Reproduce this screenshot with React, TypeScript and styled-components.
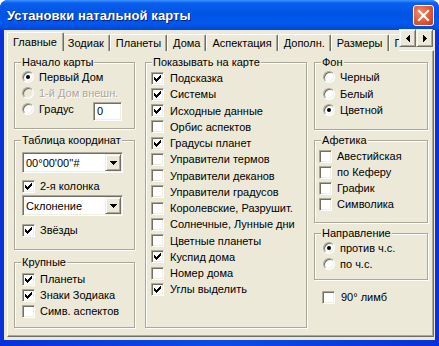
import styled, { createGlobalStyle } from "styled-components";

const GlobalStyle = createGlobalStyle`
  html, body {
    margin: 0;
    padding: 0;
    background: #ffffff;
  }
  body {
    font-family: "Liberation Sans", Arial, sans-serif;
    font-size: 11px;
    color: #000;
  }
`;

const face = "#ECE9D8";
const shadow = "#ACA899";
const dark = "#716F64";
const light = "#F1EFE2";

const Window = styled.div`
  width: 439px;
  height: 346px;
  box-sizing: border-box;
  display: flex;
  flex-direction: column;
  background: linear-gradient(to right, #0831d9, #0a4cea 50%, #0831d9);
  border-radius: 8px 8px 0 0;
  overflow: hidden;
  padding: 0 4px 6px 4px;
`;

const TitleBar = styled.div`
  height: 30px;
  margin: 0 -4px;
  display: flex;
  align-items: center;
  justify-content: space-between;
  padding: 0 5px 0 7px;
  box-sizing: border-box;
  background: linear-gradient(
    to bottom,
    #3d95ff 0%,
    #0a5fef 10%,
    #0054e3 45%,
    #0058ee 80%,
    #0046d5 100%
  );
`;

const Title = styled.span`
  font-family: "Liberation Sans", Arial, sans-serif;
  font-weight: bold;
  font-size: 13px;
  color: #fff;
  text-shadow: 1px 1px 0 #0a1f7a;
  letter-spacing: 0.1px;
`;

const CloseButton = styled.div`
  width: 21px;
  height: 21px;
  box-sizing: border-box;
  border: 1px solid #fff;
  border-radius: 3px;
  background: radial-gradient(circle at 35% 35%, #f08a6e, #e0532f 60%, #c2361a);
  display: flex;
  align-items: center;
  justify-content: center;
`;

const Body = styled.div`
  flex: 1;
  background: ${face};
  display: flex;
  flex-direction: column;
  padding: 1px 2px 3px 3px;
`;

const TabRow = styled.div`
  height: 19px;
  display: flex;
  position: relative;
  z-index: 2;
`;

const TabStrip = styled.div`
  display: flex;
  align-items: flex-end;
  width: 392px;
  overflow: hidden;
  height: 20px;
`;

const Tab = styled.div<{ $active?: boolean }>`
  flex: none;
  box-sizing: border-box;
  height: ${(p) => (p.$active ? "20px" : "17px")};
  margin: ${(p) => (p.$active ? "0 -2px -1px 0" : "0 0 0 0")};
  padding: ${(p) => (p.$active ? "0 6px 0 5px" : "0 5px 0 5px")};
  display: flex;
  align-items: center;
  background: ${face};
  border-top: 1px solid #fff;
  border-left: 1px solid #fff;
  border-right: 1px solid ${dark};
  box-shadow: inset -1px 0 0 ${shadow};
  border-radius: 2px 2px 0 0;
  position: relative;
  z-index: ${(p) => (p.$active ? 3 : 1)};
  white-space: nowrap;
  padding-bottom: ${(p) => (p.$active ? "2px" : "0")};
`;

const Arrows = styled.div`
  display: flex;
  margin-top: -2px;
  height: 18px;
`;

const ArrowButton = styled.div`
  width: 17px;
  height: 18px;
  box-sizing: border-box;
  background: ${face};
  border: 1px solid;
  border-color: ${light} ${dark} ${dark} ${light};
  box-shadow: inset 1px 1px 0 #fff, inset -1px -1px 0 ${shadow};
  display: flex;
  align-items: center;
  justify-content: center;
`;

const Panel = styled.div`
  height: 287px;
  width: 427px;
  box-sizing: border-box;
  border: 1px solid;
  border-color: #fff ${dark} ${dark} #fff;
  box-shadow: inset -1px -1px 0 ${shadow};
  display: flex;
  gap: 0;
  padding: 11px 4px 0 6px;
`;

const Column = styled.div<{ $width: number; $gap: number }>`
  width: ${(p) => p.$width}px;
  margin-right: ${(p) => p.$gap}px;
  display: flex;
  flex-direction: column;
`;

const Group = styled.div<{ $h: number; $pt: number; $pl: number; $mt?: number }>`
  position: relative;
  box-sizing: border-box;
  height: ${(p) => p.$h}px;
  margin-top: ${(p) => p.$mt ?? 0}px;
  border: 1px solid ${shadow};
  box-shadow: inset 1px 1px 0 #fff, 1px 1px 0 #fff;
  padding: ${(p) => p.$pt}px 2px 0 ${(p) => p.$pl}px;
  display: flex;
  flex-direction: column;
`;

const Legend = styled.span`
  position: absolute;
  top: -7px;
  left: 6px;
  padding: 0 1px;
  line-height: 13px;
  background: ${face};
`;

const Row = styled.div<{ $h?: number; $mt?: number; $gap?: number }>`
  height: ${(p) => p.$h ?? 16}px;
  margin-top: ${(p) => p.$mt ?? 0}px;
  display: flex;
  align-items: center;
  gap: ${(p) => p.$gap ?? 5}px;
  white-space: nowrap;
`;

const Label = styled.span<{ $disabled?: boolean }>`
  color: ${(p) => (p.$disabled ? shadow : "#000")};
  text-shadow: ${(p) => (p.$disabled ? "1px 1px 0 #fff" : "none")};
`;

const Box = styled.span`
  flex: none;
  width: 13px;
  height: 13px;
  box-sizing: border-box;
  background: #fff;
  border: 1px solid;
  border-color: ${shadow} #fff #fff ${shadow};
  box-shadow: inset 1px 1px 0 ${dark}, inset -1px -1px 0 ${light};
  display: flex;
  align-items: center;
  justify-content: center;
`;

const Circle = styled.span<{ $disabled?: boolean }>`
  flex: none;
  width: 12px;
  height: 12px;
  box-sizing: border-box;
  border-radius: 50%;
  background: ${(p) => (p.$disabled ? face : "#fff")};
  border: 1px solid;
  border-color: ${shadow} #fff #fff ${shadow};
  box-shadow: inset 1px 1px 0 ${dark}, inset -1px -1px 0 ${light};
  display: flex;
  align-items: center;
  justify-content: center;
`;

const Dot = styled.span`
  width: 4px;
  height: 4px;
  border-radius: 50%;
  background: #000;
`;

const Field = styled.div<{ $w: number; $h: number }>`
  width: ${(p) => p.$w}px;
  height: ${(p) => p.$h}px;
  box-sizing: border-box;
  background: #fff;
  border: 1px solid;
  border-color: ${shadow} #fff #fff ${shadow};
  box-shadow: inset 1px 1px 0 ${dark}, inset -1px -1px 0 ${light};
  display: flex;
  align-items: center;
  padding: 0 2px 0 3px;
`;

const ComboText = styled.span`
  flex: 1;
`;

const DropButton = styled.span`
  width: 16px;
  height: 17px;
  box-sizing: border-box;
  background: ${face};
  border: 1px solid;
  border-color: ${light} ${dark} ${dark} ${light};
  box-shadow: inset 1px 1px 0 #fff, inset -1px -1px 0 ${shadow};
  display: flex;
  align-items: center;
  justify-content: center;
  margin-right: -1px;
`;

const Check = () => (
  <svg width="7" height="7" viewBox="0 0 7 7" shapeRendering="crispEdges">
    <path
      d="M6 0h1v3h-1v1h-1v1h-1v1h-1v1h-1v-1h-1v-1h-1v-3h1v1h1v1h1v-1h1v-1h1v-1h1z"
      fill="#000"
    />
  </svg>
);

const CheckBox = ({ label, checked }: { label: string; checked?: boolean }) => (
  <>
    <Box>{checked && <Check />}</Box>
    <Label>{label}</Label>
  </>
);

const Radio = ({
  label,
  checked,
  disabled,
}: {
  label: string;
  checked?: boolean;
  disabled?: boolean;
}) => (
  <>
    <Circle $disabled={disabled}>{checked && <Dot />}</Circle>
    <Label $disabled={disabled}>{label}</Label>
  </>
);

const DownTriangle = () => (
  <svg width="7" height="4" viewBox="0 0 7 4" shapeRendering="crispEdges">
    <path d="M0 0h7v1h-1v1h-1v1h-1v1h-1v-1h-1v-1h-1v-1h-1z" fill="#000" />
  </svg>
);

const Combo = ({ value }: { value: string }) => (
  <Field $w={101} $h={21}>
    <ComboText>{value}</ComboText>
    <DropButton>
      <DownTriangle />
    </DropButton>
  </Field>
);

const tabs = ["Зодиак", "Планеты", "Дома", "Аспектация", "Дополн.", "Размеры", "Печать"];

const showItems: [string, boolean][] = [
  ["Подсказка", true],
  ["Системы", true],
  ["Исходные данные", true],
  ["Орбис аспектов", false],
  ["Градусы планет", true],
  ["Управители термов", false],
  ["Управители деканов", false],
  ["Управители градусов", false],
  ["Королевские, Разрушит.", false],
  ["Солнечные, Лунные дни", false],
  ["Цветные планеты", false],
  ["Куспид дома", true],
  ["Номер дома", false],
  ["Углы выделить", true],
];

const App = () => {
  return (
    <>
      <GlobalStyle />
      <Window>
        <TitleBar>
          <Title>Установки натальной карты</Title>
          <CloseButton>
            <svg width="13" height="13" viewBox="0 0 13 13">
              <path d="M2 2L11 11M11 2L2 11" stroke="#fff" strokeWidth="2.2" strokeLinecap="square" />
            </svg>
          </CloseButton>
        </TitleBar>
        <Body>
          <TabRow>
            <TabStrip>
              <Tab $active>Главные</Tab>
              {tabs.map((t) => (
                <Tab key={t}>{t}</Tab>
              ))}
            </TabStrip>
            <Arrows>
              <ArrowButton>
                <svg width="4" height="7" viewBox="0 0 4 7" shapeRendering="crispEdges">
                  <path d="M3 0h1v7h-1v-1h-1v-1h-1v-1h-1v-1h1v-1h1v-1h1z" fill="#000" />
                </svg>
              </ArrowButton>
              <ArrowButton>
                <svg width="4" height="7" viewBox="0 0 4 7" shapeRendering="crispEdges">
                  <path d="M0 0h1v1h1v1h1v1h1v1h-1v1h-1v1h-1v1h-1z" fill="#000" />
                </svg>
              </ArrowButton>
            </Arrows>
          </TabRow>
          <Panel>
            <Column $width={121} $gap={10}>
              <Group $h={67} $pt={6} $pl={7}>
                <Legend>Начало карты</Legend>
                <Row>
                  <Radio label="Первый Дом" checked />
                </Row>
                <Row>
                  <Radio label="1-й Дом внешн." disabled />
                </Row>
                <Row>
                  <Radio label="Градус" />
                  <Field $w={29} $h={19} style={{ marginLeft: 14, marginTop: 4 }}>
                    0
                  </Field>
                </Row>
              </Group>
              <Group $h={110} $pt={11} $pl={7} $mt={11}>
                <Legend>Таблица координат</Legend>
                <Combo value="00°00'00''#" />
                <Row $mt={5}>
                  <CheckBox label="2-я колонка" checked />
                </Row>
                <Row $h={21} $mt={1}>
                  <Combo value="Склонение" />
                </Row>
                <Row $mt={6}>
                  <CheckBox label="Звёзды" checked />
                </Row>
              </Group>
              <Group $h={66} $pt={8} $pl={7} $mt={12}>
                <Legend>Крупные</Legend>
                <Row>
                  <CheckBox label="Планеты" checked />
                </Row>
                <Row>
                  <CheckBox label="Знаки Зодиака" checked />
                </Row>
                <Row>
                  <CheckBox label="Симв. аспектов" />
                </Row>
              </Group>
            </Column>
            <Column $width={162} $gap={7}>
              <Group $h={266} $pt={7} $pl={5}>
                <Legend>Показывать на карте</Legend>
                {showItems.map(([label, checked]) => (
                  <Row key={label} $h={16.25} $gap={6}>
                    <CheckBox label={label} checked={checked} />
                  </Row>
                ))}
              </Group>
            </Column>
            <Column $width={114} $gap={0}>
              <Group $h={68} $pt={6} $pl={8}>
                <Legend>Фон</Legend>
                <Row $h={16.5}>
                  <Radio label="Черный" />
                </Row>
                <Row $h={16.5}>
                  <Radio label="Белый" />
                </Row>
                <Row $h={16.5}>
                  <Radio label="Цветной" checked />
                </Row>
              </Group>
              <Group $h={83} $pt={7} $pl={4} $mt={10}>
                <Legend>Афетика</Legend>
                <Row>
                  <CheckBox label="Авестийская" checked={false} />
                </Row>
                <Row>
                  <CheckBox label="по Кеферу" />
                </Row>
                <Row>
                  <CheckBox label="График" />
                </Row>
                <Row>
                  <CheckBox label="Символика" />
                </Row>
              </Group>
              <Group $h={47} $pt={6} $pl={8} $mt={10}>
                <Legend>Направление</Legend>
                <Row>
                  <Radio label="против ч.с." checked />
                </Row>
                <Row>
                  <Radio label="по ч.с." />
                </Row>
              </Group>
              <Row $mt={9} $gap={6} style={{ paddingLeft: 8 }}>
                <CheckBox label="90° лимб" />
              </Row>
            </Column>
          </Panel>
        </Body>
      </Window>
    </>
  );
};

export default App;
